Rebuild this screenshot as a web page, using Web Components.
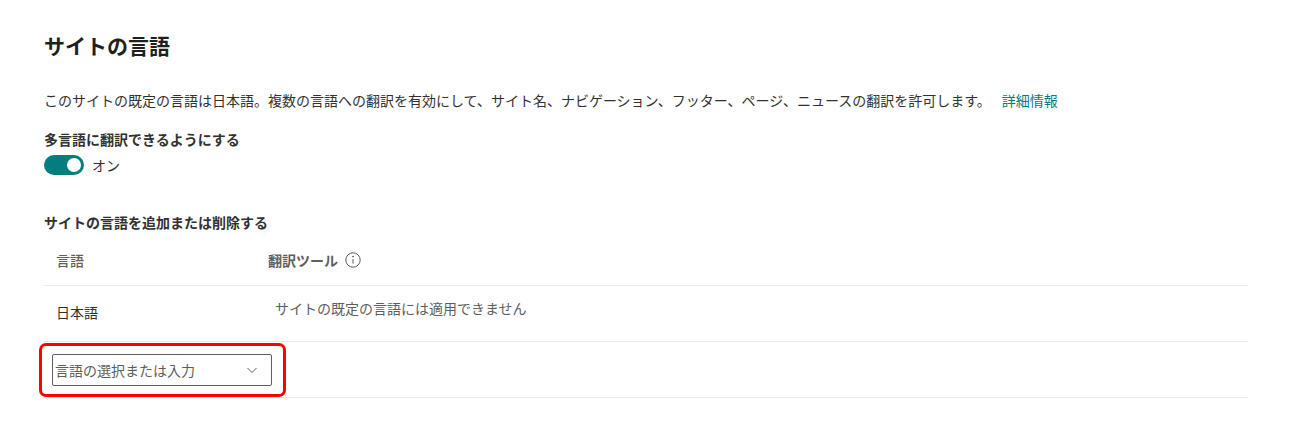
<!DOCTYPE html>
<html lang="ja">
<head>
<meta charset="utf-8">
<title>サイトの言語</title>
<style>
  html, body { margin: 0; background: #fff; }
  body { font-family: "Noto Sans CJK JP", "Noto Sans", sans-serif; color: #323130; }
</style>
</head>
<body>
<language-settings>
  <span slot="title">サイトの言語</span>
  <span slot="description">このサイトの既定の言語は日本語。複数の言語への翻訳を有効にして、サイト名、ナビゲーション、フッター、ページ、ニュースの翻訳を許可します。</span>
  <a slot="link" href="#">詳細情報</a>
</language-settings>

<script>
class UiToggle extends HTMLElement {
  connectedCallback() {
    this.attachShadow({ mode: 'open' });
    this.shadowRoot.innerHTML = `
      <style>
        :host { display: flex; align-items: center; gap: 8px; font-size: 14px; line-height: 20px; color: #323130; }
        .track { width: 40px; height: 20px; border-radius: 10px; background: #037e7e; position: relative; }
        .thumb { position: absolute; right: 4px; top: 4px; width: 12px; height: 12px; border-radius: 50%; background: #fff; box-shadow: 0 0 0 1px #fff; }
      </style>
      <div class="track"><div class="thumb"></div></div>
      <slot></slot>
    `;
  }
}

class LangCombo extends HTMLElement {
  connectedCallback() {
    this.attachShadow({ mode: 'open' });
    this.shadowRoot.innerHTML = `
      <style>
        :host { display: flex; align-items: center; justify-content: space-between; box-sizing: border-box; width: 220px; height: 32px; border: 1px solid #605e5c; border-radius: 2px; padding: 0 13px 0 2px; font-size: 14px; color: #605e5c; }
        svg { display: block; }
      </style>
      <slot></slot>
      <svg width="12" height="12" viewBox="0 0 12 12" fill="none" stroke="#605e5c" stroke-width="1"><path d="M1.5 4 6 8.5 10.5 4"/></svg>
    `;
  }
}

class LangRow extends HTMLElement {
  connectedCallback() {
    this.attachShadow({ mode: 'open' });
    this.shadowRoot.innerHTML = `
      <style>
        :host { display: flex; box-sizing: border-box; border-bottom: 1px solid #edebe9; font-size: 14px; color: #323130; }
        .lang { box-sizing: border-box; width: 224px; padding-left: 12px; flex: none; }
      </style>
      <div class="lang"><slot name="lang"></slot></div>
      <div><slot name="tool"></slot></div>
    `;
  }
}

class LanguageSettings extends HTMLElement {
  connectedCallback() {
    this.attachShadow({ mode: 'open' });
    this.shadowRoot.innerHTML = `
      <style>
        :host { display: block; padding: 31px 46px 0 44px; font-size: 14px; line-height: 20px; color: #323130; }
        h2 { margin: 0; font-size: 21px; line-height: 28px; font-weight: 700; color: #201f1e; }
        .desc { margin: 31px 0 0; display: flex; gap: 11px; white-space: nowrap; }
        ::slotted(a) { color: #037e7e; text-decoration: none; }
        .label { margin-top: 19px; font-weight: 700; }
        ui-toggle { margin-top: 6px; }
        .label2 { margin-top: 37px; }
        lang-row.head { height: 54px; padding-top: 3px; font-weight: 500; color: #605e5c; align-items: center; }
        lang-row.head span, lang-row.first span { display: block; }
        .tool-head { display: flex; align-items: center; gap: 7px; font-weight: 700; }
        .tool-head svg { display: block; }
        lang-row.first { height: 56px; padding-top: 16px; }
        .tool-msg { display: block; margin: -4px 0 0 7px; color: #605e5c; }
        .combo-wrap { position: relative; height: 56px; border-bottom: 1px solid #edebe9; box-sizing: border-box; padding: 12px 0 0 8px; }
        .mark { position: absolute; left: -5px; top: 1px; width: 247px; height: 54px; box-sizing: border-box; border: 3px solid #f00; border-radius: 7px; }
      </style>
      <h2><slot name="title"></slot></h2>
      <div class="desc"><span><slot name="description"></slot></span><slot name="link"></slot></div>
      <div class="label">多言語に翻訳できるようにする</div>
      <ui-toggle>オン</ui-toggle>
      <div class="label label2">サイトの言語を追加または削除する</div>
      <lang-row class="head">
        <span slot="lang">言語</span>
        <div slot="tool" class="tool-head">
          <span>翻訳ツール</span>
          <svg width="16" height="16" viewBox="0 0 16 16" fill="none" stroke="#605e5c"><circle cx="8" cy="8" r="7.2"/><path d="M8 7v4.5"/><circle cx="8" cy="4.6" r=".5" fill="#605e5c"/></svg>
        </div>
      </lang-row>
      <lang-row class="first">
        <span slot="lang">日本語</span>
        <span slot="tool" class="tool-msg">サイトの既定の言語には適用できません</span>
      </lang-row>
      <div class="combo-wrap">
        <lang-combo>言語の選択または入力</lang-combo>
        <div class="mark"></div>
      </div>
    `;
  }
}

customElements.define('ui-toggle', UiToggle);
customElements.define('lang-combo', LangCombo);
customElements.define('lang-row', LangRow);
customElements.define('language-settings', LanguageSettings);
</script>
</body>
</html>
